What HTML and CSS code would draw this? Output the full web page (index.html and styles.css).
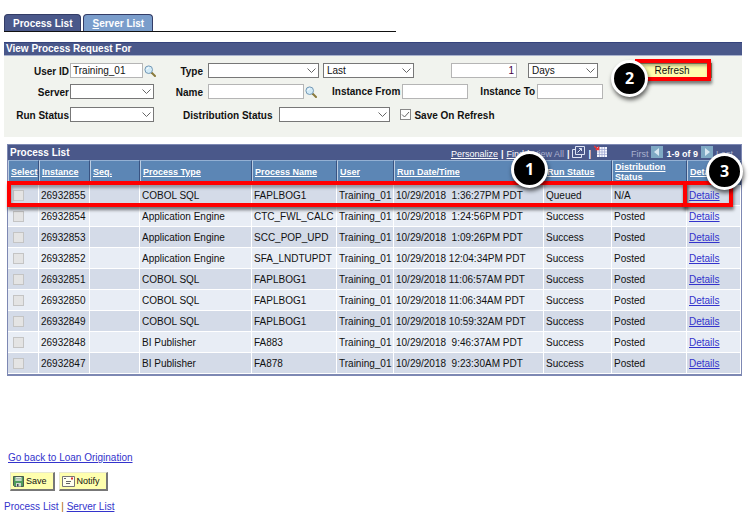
FILE: index.html
```html
<!DOCTYPE html>
<html lang="en">
<head>
    <meta charset="utf-8">
    <title>Process List</title>
    <link rel="stylesheet" href="styles.css">
</head>
<body>
<svg class="symbols">
    <symbol id="lens" viewBox="0 0 12 12">
        <path d="M7.5 7.5L11 11" stroke="#8a7a3c" stroke-width="2" stroke-linecap="round"/>
        <circle cx="4.7" cy="4.7" r="3.8" fill="#d3ebf7" stroke="#7398b5"/>
        <path d="M2.8 4.5Q3 2.8 4.8 2.7" fill="none" stroke="#fff"/>
    </symbol>
</svg>

<nav class="tabs">
    <a class="tab active" href="#process">Process List</a>
    <a class="tab" href="#server"><u>S</u>erver List</a>
</nav>

<form class="panel">
    <h2 class="bar">View Process Request For</h2>
    <div class="fields">
        <div class="row">
            <label class="first" for="user">User ID</label>
            <div class="slot">
                <input class="text user" id="user" type="text" value="Training_01">
                <button class="lookup" type="button" aria-label="Look up User ID"><svg width="12" height="12"><use href="#lens"/></svg></button>
            </div>
            <label class="second" for="type">Type</label>
            <select class="wide" id="type"><option></option></select>
            <select class="last" aria-label="Period"><option>Last</option></select>
            <input class="text amount" type="text" value="1" aria-label="Amount">
            <select class="unit" aria-label="Unit"><option>Days</option></select>
            <div class="refresh-wrap">
                <button class="refresh" type="button">Refresh</button>
                <span class="mark mark-refresh"></span>
                <span class="badge badge-two">2</span>
            </div>
        </div>
        <div class="row">
            <label class="first" for="server">Server</label>
            <div class="slot"><select class="small" id="server"><option></option></select></div>
            <label class="second" for="name">Name</label>
            <input class="text name" id="name" type="text">
            <button class="lookup" type="button" aria-label="Look up Name"><svg width="12" height="12"><use href="#lens"/></svg></button>
            <label class="from" for="from">Instance From</label>
            <input class="text instance" id="from" type="text">
            <label class="to" for="to">Instance To</label>
            <input class="text instance" id="to" type="text">
        </div>
        <div class="row">
            <label class="first" for="status">Run Status</label>
            <div class="slot"><select class="small" id="status"><option></option></select></div>
            <label class="dist" for="dist">Distribution Status</label>
            <select class="wide" id="dist"><option></option></select>
            <input class="check save-check" id="save" type="checkbox" checked>
            <label for="save">Save On Refresh</label>
        </div>
    </div>
</form>

<section class="grid">
    <div class="bar grid-bar">
        <h2>Process List</h2>
        <div class="tools">
            <a href="#personalize">Personalize</a><b>|</b>
            <a href="#find">Find</a><b>|</b>
            <span class="dim">View All</span><b>|</b>
            <svg width="13" height="12" viewBox="0 0 13 12" fill="none" stroke="#dfe5f5">
                <path d="M3.5 8.500V.5H12.500V8.500ZM3.500 3.500H.5V11.500H9.500V8.500"/>
                <path d="M5.500 6.500L9.500 2.500M7 2.500H9.500V5"/>
            </svg><b>|</b>
            <svg width="13" height="13" viewBox="0 0 13 13">
                <path d="M3 2H13V12H3Z" fill="#f4f5fc"/>
                <path d="M3 4.500H13M3 7H13M3 9.500H13M5.500 2V12M8 2V12M10.500 2V12" stroke="#9ba3d0" stroke-width=".7"/>
                <path d="M0 1L4 4M4.500 1.500V4.500H1.500" fill="none" stroke="#e33" stroke-width="1.500"/>
            </svg>
        </div>
        <div class="pager">
            <span class="dim">First</span>
            <svg width="12" height="12"><path d="M0 0H12V12H0Z" fill="#7fa9c4"/><path d="M8 2V10L3 6Z" fill="#d8e7f2"/></svg>
            <b>1-9 of 9</b>
            <svg width="12" height="12"><path d="M0 0H12V12H0Z" fill="#7fa9c4"/><path d="M4 2V10L9 6Z" fill="#d8e7f2"/></svg>
            <span class="dim">Last</span>
        </div>
    </div>
    <table>
        <colgroup>
            <col class="c-select"><col class="c-instance"><col class="c-seq"><col>
            <col class="c-name"><col class="c-user"><col class="c-date"><col class="c-run">
            <col class="c-dist"><col class="c-details">
        </colgroup>
        <thead>
            <tr>
                <th><a href="#s">Select</a></th>
                <th><a href="#s">Instance</a></th>
                <th><a href="#s">Seq.</a></th>
                <th><a href="#s">Process Type</a></th>
                <th><a href="#s">Process Name</a></th>
                <th><a href="#s">User</a></th>
                <th><a href="#s">Run Date/Time</a></th>
                <th><a href="#s">Run Status</a></th>
                <th><a href="#s">Distribution Status</a></th>
                <th><a href="#s">Details</a></th>
            </tr>
        </thead>
        <tbody>
            <tr><td><input class="check" type="checkbox" disabled aria-label="Select 26932855"></td><td>26932855</td><td></td><td>COBOL SQL</td><td>FAPLBOG1</td><td>Training_01</td><td>10/29/2018  1:36:27PM PDT</td><td>Queued</td><td>N/A</td><td><a href="#d">Details</a></td></tr>
            <tr><td><input class="check" type="checkbox" disabled aria-label="Select 26932854"></td><td>26932854</td><td></td><td>Application Engine</td><td>CTC_FWL_CALC</td><td>Training_01</td><td>10/29/2018  1:24:56PM PDT</td><td>Success</td><td>Posted</td><td><a href="#d">Details</a></td></tr>
            <tr><td><input class="check" type="checkbox" disabled aria-label="Select 26932853"></td><td>26932853</td><td></td><td>Application Engine</td><td>SCC_POP_UPD</td><td>Training_01</td><td>10/29/2018  1:09:26PM PDT</td><td>Success</td><td>Posted</td><td><a href="#d">Details</a></td></tr>
            <tr><td><input class="check" type="checkbox" disabled aria-label="Select 26932852"></td><td>26932852</td><td></td><td>Application Engine</td><td>SFA_LNDTUPDT</td><td>Training_01</td><td>10/29/2018 12:04:34PM PDT</td><td>Success</td><td>Posted</td><td><a href="#d">Details</a></td></tr>
            <tr><td><input class="check" type="checkbox" disabled aria-label="Select 26932851"></td><td>26932851</td><td></td><td>COBOL SQL</td><td>FAPLBOG1</td><td>Training_01</td><td>10/29/2018 11:06:57AM PDT</td><td>Success</td><td>Posted</td><td><a href="#d">Details</a></td></tr>
            <tr><td><input class="check" type="checkbox" disabled aria-label="Select 26932850"></td><td>26932850</td><td></td><td>COBOL SQL</td><td>FAPLBOG1</td><td>Training_01</td><td>10/29/2018 11:06:34AM PDT</td><td>Success</td><td>Posted</td><td><a href="#d">Details</a></td></tr>
            <tr><td><input class="check" type="checkbox" disabled aria-label="Select 26932849"></td><td>26932849</td><td></td><td>COBOL SQL</td><td>FAPLBOG1</td><td>Training_01</td><td>10/29/2018 10:59:32AM PDT</td><td>Success</td><td>Posted</td><td><a href="#d">Details</a></td></tr>
            <tr><td><input class="check" type="checkbox" disabled aria-label="Select 26932848"></td><td>26932848</td><td></td><td>BI Publisher</td><td>FA883</td><td>Training_01</td><td>10/29/2018  9:46:37AM PDT</td><td>Success</td><td>Posted</td><td><a href="#d">Details</a></td></tr>
            <tr><td><input class="check" type="checkbox" disabled aria-label="Select 26932847"></td><td>26932847</td><td></td><td>BI Publisher</td><td>FA878</td><td>Training_01</td><td>10/29/2018  9:23:30AM PDT</td><td>Success</td><td>Posted</td><td><a href="#d">Details</a></td></tr>
        </tbody>
    </table>
    <!-- callouts over the first row -->
    <span class="mark mark-row"></span>
    <span class="mark mark-details"></span>
    <span class="badge badge-one">1</span>
    <span class="badge badge-three">3</span>
</section>

<footer>
    <a href="#loan">Go back to Loan Origination</a>
    <div class="actions">
        <button class="action" type="button">
            <svg width="11" height="11" viewBox="0 0 11 11">
                <path d="M.5.5H10.500V10.500H1.500L.5 9.500Z" fill="#4f9a5c" stroke="#4a5a50"/>
                <path d="M2.500 1H8.500V5H2.500Z" fill="#e4efe4"/>
                <path d="M3 2.500H8M3 4H8" stroke="#7d947f" stroke-width=".6"/>
                <path d="M3 7H8V10.500H3Z" fill="#cfd6cf"/><path d="M4 8H5.500V10.500H4Z" fill="#445"/>
            </svg>
            Save
        </button>
        <button class="action" type="button">
            <svg width="13" height="11" viewBox="0 0 13 11">
                <path d="M.5.5H12.500V10.500H.5Z" fill="#fffff0" stroke="#777"/>
                <path d="M2 2.500H4M4 5.500H9M4 7.500H8" stroke="#666"/>
                <path d="M9 2.500H11" stroke="#d33" stroke-width="2"/>
            </svg>
            Notify
        </button>
    </div>
    <div class="links"><span>Process List</span> <i>|</i> <a href="#server">Server List</a></div>
</footer>
</body>
</html>
```

FILE: styles.css
```css
* {
    box-sizing: border-box;
}
body {
    margin: 0;
    padding: 14px 13px 0 4px;
    background: #fff;
    color: #111;
    font-family: "Liberation Sans", Arial, sans-serif;
    font-size: 10px;
    line-height: 12px;
}
button, input, select {
    margin: 0;
    font: inherit;
    color: inherit;
}
h2 {
    margin: 0;
    font-size: 10px;
    font-weight: bold;
}
svg {
    display: block;
    flex: none;
}
.symbols {
    position: absolute;
    width: 0;
    height: 0;
}

/* tabs */
.tabs {
    display: flex;
    gap: 2px;
    width: 392px;
    border-bottom: 1px solid #111;
}
.tab {
    height: 17px;
    padding: 0 8px;
    border: 1px solid #333c66;
    border-bottom: 0;
    border-radius: 4px 4px 0 0;
    background: #7a9dcb;
    color: #fff;
    font-weight: bold;
    line-height: 17px;
    text-decoration: none;
}
.tab.active {
    background: #4a588a;
}

/* search panel */
.panel {
    margin-top: 10px;
    background: #f1f3ee;
}
.bar {
    height: 14px;
    padding: 0 2px;
    border-top: 1px solid #34437c;
    border-bottom: 1px solid #a9b2cd;
    background: #4a588a;
    color: #fff;
    line-height: 12px;
}
.fields {
    display: flex;
    flex-direction: column;
    gap: 6px;
    padding: 7px 0 15px;
}
.row {
    display: flex;
    align-items: center;
    height: 15px;
    font-weight: bold;
}
.row:last-child {
    margin-top: 2px;
}
.row label {
    flex: none;
    padding-top: 2px;
    white-space: nowrap;
}
.row .first {
    width: 66px;
    padding-right: 1px;
    text-align: right;
}
.row .second {
    width: 48px;
    margin-right: 5px;
    text-align: right;
}
.row .dist {
    margin: 0 7px 0 28px;
}
.row .from, .row .to {
    padding-top: 0;
}
.row .from {
    margin: 0 2px 0 15px;
}
.row .to {
    margin: 0 2px 0 12px;
}
.slot {
    display: flex;
    flex: none;
    width: 85px;
}
.text, select {
    flex: none;
    height: 15px;
    padding: 0 2px;
    border: 1px solid #b5b5b5;
    border-radius: 0;
    background: #fff;
    font-weight: normal;
}
select {
    appearance: none;
    padding: 0 3px;
    border-color: #777;
    background: #fff url("data:image/svg+xml,%3Csvg xmlns='http://www.w3.org/2000/svg' width='9' height='6'%3E%3Cpath d='M.5.5L4.500 4.500L8.500.5' fill='none' stroke='%23666'/%3E%3C/svg%3E") no-repeat right 2px center;
}
.user {
    width: 73px;
}
.small {
    width: 84px;
}
.wide {
    width: 111px;
}
.last {
    width: 91px;
    margin-left: 4px;
}
.amount {
    width: 66px;
    margin: 0 11px 0 37px;
    color: #404;
    text-align: right;
}
.unit {
    width: 70px;
}
.name {
    width: 96px;
}
.instance {
    width: 66px;
}
.lookup {
    padding: 0;
    border: 0;
    margin: 1px 0 0 1px;
    background: none;
}
.check {
    appearance: none;
    display: block;
    flex: none;
    width: 11px;
    height: 11px;
    border: 1px solid #888;
    background: #fff;
}
.check:checked {
    background: #fff url("data:image/svg+xml,%3Csvg xmlns='http://www.w3.org/2000/svg' width='9' height='9'%3E%3Cpath d='M1 4.500L3.500 7L8 2' fill='none' stroke='%23666'/%3E%3C/svg%3E") no-repeat center;
}
.check:disabled {
    border-color: #c4c4c4;
    background: #e4e4e4;
}
.save-check {
    margin: 0 3px 0 10px;
}
.refresh-wrap {
    position: relative;
    margin-left: 38px;
}
.refresh {
    display: block;
    width: 76px;
    height: 15px;
    padding: 0 4px 0 0;
    border: 1px solid #9a9a70;
    background: #ffffae;
    font-weight: normal;
    line-height: 13px;
}

/* table */
.grid {
    position: relative;
    margin: 7px 0 0 3px;
    border: 1px solid #7d88b3;
    border-bottom-width: 2px;
}
.grid-bar {
    display: flex;
    align-items: center;
    height: 15px;
    border: 0;
    font-size: 9px;
}
.tools, .pager {
    display: flex;
    align-items: center;
    gap: 3px;
    padding-top: 2px;
    white-space: nowrap;
}
.tools svg, .pager svg {
    margin-bottom: 4px;
}
.tools {
    margin-left: auto;
}
.pager {
    margin: 0 6px 0 24px;
}
.grid-bar a {
    color: inherit;
}
.dim {
    color: #aab2cf;
}
table {
    width: 100%;
    border-collapse: separate;
    border-spacing: 0;
    table-layout: fixed;
}
.c-select {
    width: 31px;
}
.c-instance {
    width: 51px;
}
.c-seq {
    width: 50px;
}
.c-name {
    width: 85px;
}
.c-user {
    width: 57px;
}
.c-date {
    width: 150px;
}
.c-run {
    width: 68px;
}
.c-dist {
    width: 75px;
}
.c-details {
    width: 54px;
}
th {
    height: 25px;
    padding: 0 2px 2px;
    border-top: 1px solid #93b0d3;
    border-left: 1px solid #bccde2;
    border-right: 1px solid #395382;
    background: #5c86b5;
    color: #fff;
    font-size: 9px;
    line-height: 10px;
    text-align: left;
}
td {
    height: 21px;
    padding: 1px 2px 0;
    border-right: 1px solid #fff;
    border-bottom: 1px solid #fff;
    background: #e8edf5;
    white-space: pre;
}
td .check {
    margin-left: 3px;
}
tr:nth-child(odd) td {
    background: #d4dbe8;
}
a {
    color: #33c;
}
th a {
    color: inherit;
}

/* callouts */
.mark {
    position: absolute;
    border: 4px solid #f00;
    box-shadow: 1px 3px 3px rgba(0, 0, 0, .5), inset 1px 3px 3px rgba(0, 0, 0, .3);
    pointer-events: none;
}
.mark-refresh {
    top: -4px;
    right: 1px;
    bottom: -3px;
    left: -1px;
}
.mark-row {
    top: 36px;
    right: 54px;
    left: -1px;
    height: 26px;
}
.mark-details {
    top: 36px;
    right: 8px;
    width: 50px;
    height: 26px;
}
.badge {
    position: absolute;
    width: 37px;
    height: 37px;
    border: 3px solid #fff;
    border-radius: 50%;
    background: #000;
    box-shadow: 1px 3px 4px rgba(0, 0, 0, .6);
    color: #fff;
    font: bold 16px/31px "Open Sans", sans-serif;
    text-align: center;
}
.badge-one {
    top: 6px;
    right: 193px;
}
.badge-two {
    top: -3px;
    left: -25px;
}
.badge-three {
    top: 8px;
    right: -2px;
}

/* footer */
footer {
    margin-top: 76px;
}
footer > a {
    margin-left: 4px;
}
.actions {
    display: flex;
    gap: 4px;
    margin: 8px 0 10px 6px;
}
.action {
    display: flex;
    align-items: center;
    gap: 2px;
    height: 19px;
    padding: 0 6px 0 2px;
    border: 1px solid #e8e8d0;
    border-right: 2px solid #777;
    border-bottom: 2px solid #777;
    background: #ffffae;
    font-size: 9px;
}
.links {
    color: #33c;
}
.links i {
    color: #a60;
    font-style: normal;
}
```
